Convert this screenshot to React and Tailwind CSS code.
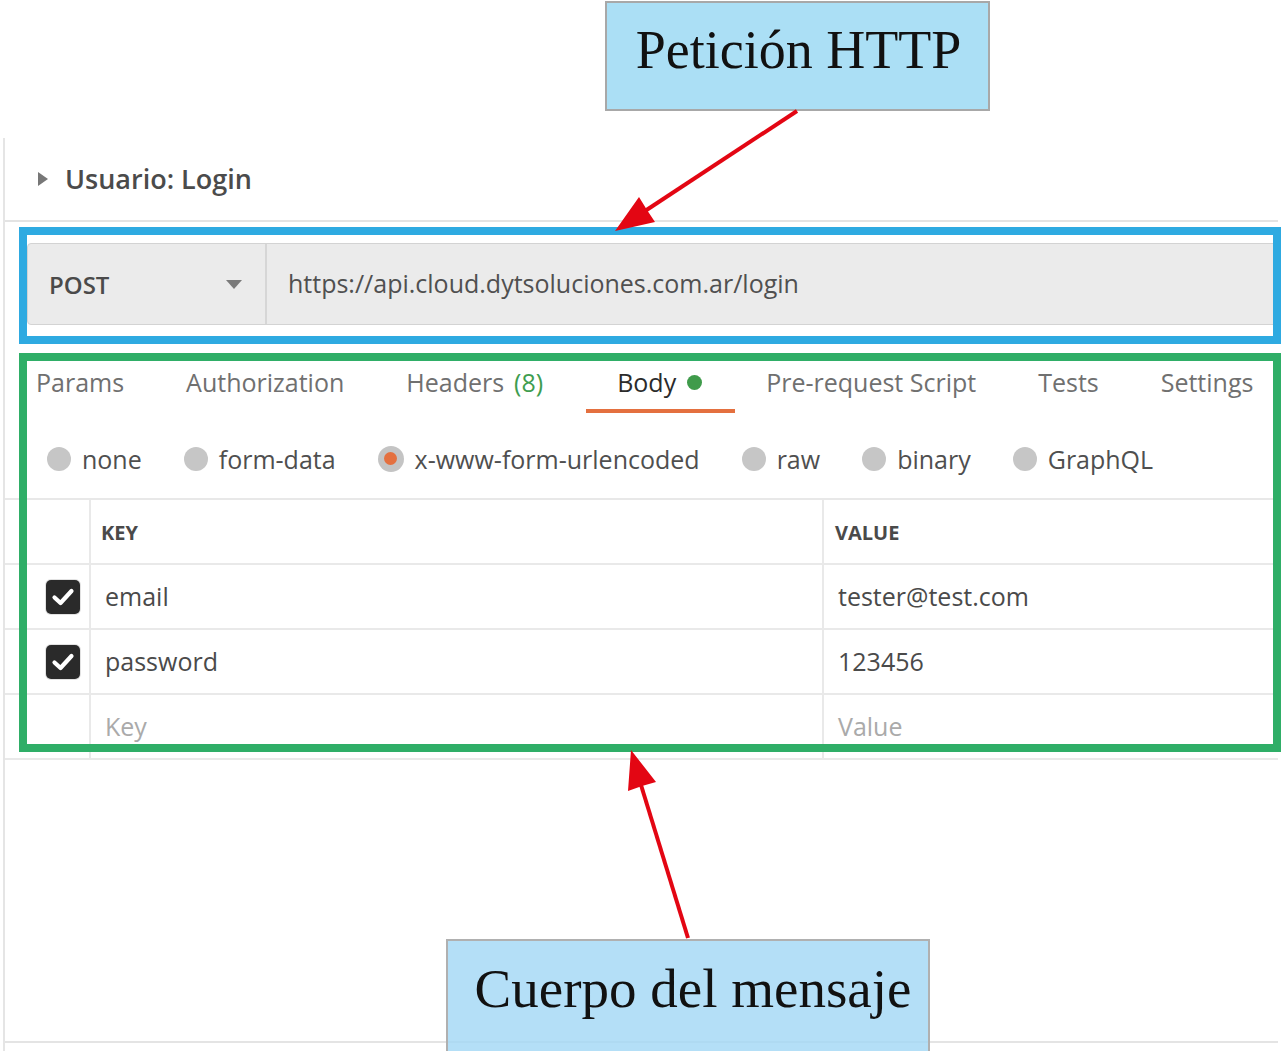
import React from 'react';

const tabs = [
    { label: 'Params' },
    { label: 'Authorization' },
    { label: 'Headers', count: '(8)' },
    { label: 'Body', active: true, dot: true },
    { label: 'Pre-request Script' },
    { label: 'Tests' },
    { label: 'Settings' },
];

const bodyTypes = [
    { label: 'none' },
    { label: 'form-data' },
    { label: 'x-www-form-urlencoded', selected: true },
    { label: 'raw' },
    { label: 'binary' },
    { label: 'GraphQL' },
];

const rows = [
    { key: 'email', value: 'tester@test.com', checked: true },
    { key: 'password', value: '123456', checked: true },
    { key: 'Key', value: 'Value', placeholder: true },
];

function Checkbox() {
    return (
        <div className="w-[34px] h-[34px] rounded-[5px] bg-[#2a2a2a] ring-1 ring-[#e2e2e2] flex items-center justify-center">
            <svg width="34" height="34" viewBox="0 0 34 34">
                <polyline points="8.5,17.5 14.5,23 25.5,11" fill="none" stroke="#fff" strokeWidth="4.2" strokeLinecap="round" strokeLinejoin="round" />
            </svg>
        </div>
    );
}

function Radio({ selected }) {
    if (selected) {
        return (
            <span className="w-[26px] h-[26px] rounded-full bg-[#c4c4c4] flex items-center justify-center">
                <span className="w-[13px] h-[13px] rounded-full bg-[#e4703f]" />
            </span>
        );
    }
    return <span className="w-[24px] h-[24px] rounded-full bg-[#c6c6c6]" />;
}

function Arrows() {
    return (
        <svg className="absolute inset-0 pointer-events-none" width="1282" height="1051" viewBox="0 0 1282 1051">
            {/* Petición HTTP -> request bar */}
            <line x1="797" y1="111" x2="645" y2="211" stroke="#e30613" strokeWidth="4" />
            <polygon points="615,231 639,197 647,210 655,222" fill="#e30613" />
            {/* Cuerpo del mensaje -> body panel */}
            <line x1="688" y1="938" x2="641" y2="785" stroke="#e30613" strokeWidth="4" />
            <polygon points="631,750 656,782 642,786 628,791" fill="#e30613" />
        </svg>
    );
}

export default function App() {
    return (
        <div className="relative w-full h-[1051px] bg-white overflow-hidden" style={{ fontFamily: '"Open Sans", "Liberation Sans", sans-serif' }}>
            <div className="h-full pt-[138px] pl-[3px]">
                <div className="h-full border-l-2 border-[#e5e5e5] pr-[4px] flex flex-col">
                    {/* request name */}
                    <div className="h-[84px] shrink-0 border-b-2 border-[#e3e3e3] flex items-center pl-[33px]">
                        <span className="w-0 h-0 border-y-[7px] border-y-transparent border-l-[10px] border-l-[#777777]" />
                        <span className="ml-[17px] text-[27px] font-semibold text-[#4b4b4b] leading-none -mt-[2px]">Usuario: Login</span>
                    </div>

                    {/* method + url */}
                    <div className="pt-[21px] pl-[22px] shrink-0">
                        <div className="h-[82px] flex rounded-l-[4px] border border-[#d3d3d3] bg-[#ebebeb]">
                            <div className="w-[239px] shrink-0 border-r-2 border-[#d6d6d6] flex items-center justify-between pl-[21px] pr-[23px]">
                                <span className="text-[24px] font-semibold text-[#4a4a4a] mt-[2px]">POST</span>
                                <span className="w-0 h-0 border-x-[8px] border-x-transparent border-t-[9px] border-t-[#7a7a7a]" />
                            </div>
                            <div className="flex-1 flex items-center pl-[21px] text-[25px] text-[#505050] whitespace-nowrap">
                                https://api.cloud.dytsoluciones.com.ar/login
                            </div>
                        </div>
                    </div>

                    {/* tabs */}
                    <div className="mt-[20px] flex shrink-0 whitespace-nowrap">
                        {tabs.map((t) => (
                            <div
                                key={t.label}
                                className={`shrink-0 pt-[21px] pb-[11px] border-b-4 flex items-center text-[25px] leading-[32px] ${t.active ? 'ml-[12px] pl-[31px] pr-[33px] border-[#e4703f] text-[#2b2b2b]' : 'px-[31px] border-transparent text-[#707070]'}`}
                            >
                                {t.label}
                                {t.count && <span className="ml-[10px] text-[#3e9d4f]">{t.count}</span>}
                                {t.dot && <span className="ml-[11px] w-[15px] h-[15px] rounded-full bg-[#3f9b4b]" />}
                            </div>
                        ))}
                    </div>

                    {/* body types */}
                    <div className="h-[87px] shrink-0 border-b-2 border-[#e8e8e8] flex items-center gap-[42px] pl-[42px] pt-[6px] whitespace-nowrap">
                        {bodyTypes.map((b) => (
                            <div key={b.label} className="flex items-center gap-[11px]">
                                <Radio selected={b.selected} />
                                <span className="text-[25px] text-[#4f4f4f] leading-[32px]">{b.label}</span>
                            </div>
                        ))}
                    </div>

                    {/* key / value table */}
                    <div className="shrink-0">
                        <div className="grid grid-cols-[86px_733px_1fr] h-[65px] border-b-2 border-[#e9e9e9]">
                            <div className="border-r-2 border-[#e9e9e9]" />
                            <div className="border-r-2 border-[#e9e9e9] flex items-center pl-[10px] pt-[3px] text-[20px] font-bold text-[#4a4a4a]">KEY</div>
                            <div className="flex items-center pl-[11px] pt-[3px] text-[20px] font-bold text-[#4a4a4a]">VALUE</div>
                        </div>
                        {rows.map((r) => (
                            <div key={r.key} className="grid grid-cols-[86px_733px_1fr] h-[65px] border-b-2 border-[#e9e9e9]">
                                <div className="border-r-2 border-[#e9e9e9] flex items-center pl-[41px]">
                                    {r.checked && <Checkbox />}
                                </div>
                                <div className={`border-r-2 border-[#e9e9e9] flex items-center pl-[14px] text-[25px] ${r.placeholder ? 'text-[#aaaaaa]' : 'text-[#4a4a4a]'}`}>{r.key}</div>
                                <div className={`flex items-center pl-[14px] text-[25px] ${r.placeholder ? 'text-[#aaaaaa]' : 'text-[#4a4a4a]'}`}>{r.value}</div>
                            </div>
                        ))}
                    </div>

                    <div className="h-[283px] shrink-0 border-b-2 border-[#e4e4e4]" />
                </div>
            </div>

            {/* annotation frames */}
            <div className="absolute left-[19px] top-[227px] w-[1262px] h-[117px] border-[8px] border-[#2eaae1]" />
            <div className="absolute left-[19px] top-[353px] w-[1262px] h-[399px] border-[8px] border-[#2fae67]" />

            {/* annotation labels */}
            <div className="absolute left-[605px] top-[1px] w-[385px] h-[110px] bg-[#abdff5] border-2 border-[#a8a8a8] flex justify-center pt-[20px] pl-[2px]">
                <span className="text-[54px] leading-none text-[#111111]" style={{ fontFamily: '"Liberation Serif", serif' }}>Petición HTTP</span>
            </div>
            <div className="absolute left-[446px] top-[939px] w-[484px] h-[116px] bg-[rgba(161,215,245,0.8)] border-2 border-[#b0b0b0] flex justify-center pt-[20px] pl-[10px]">
                <span className="text-[55px] leading-none text-[#111111]" style={{ fontFamily: '"Liberation Serif", serif' }}>Cuerpo del mensaje</span>
            </div>

            <Arrows />
        </div>
    );
}
